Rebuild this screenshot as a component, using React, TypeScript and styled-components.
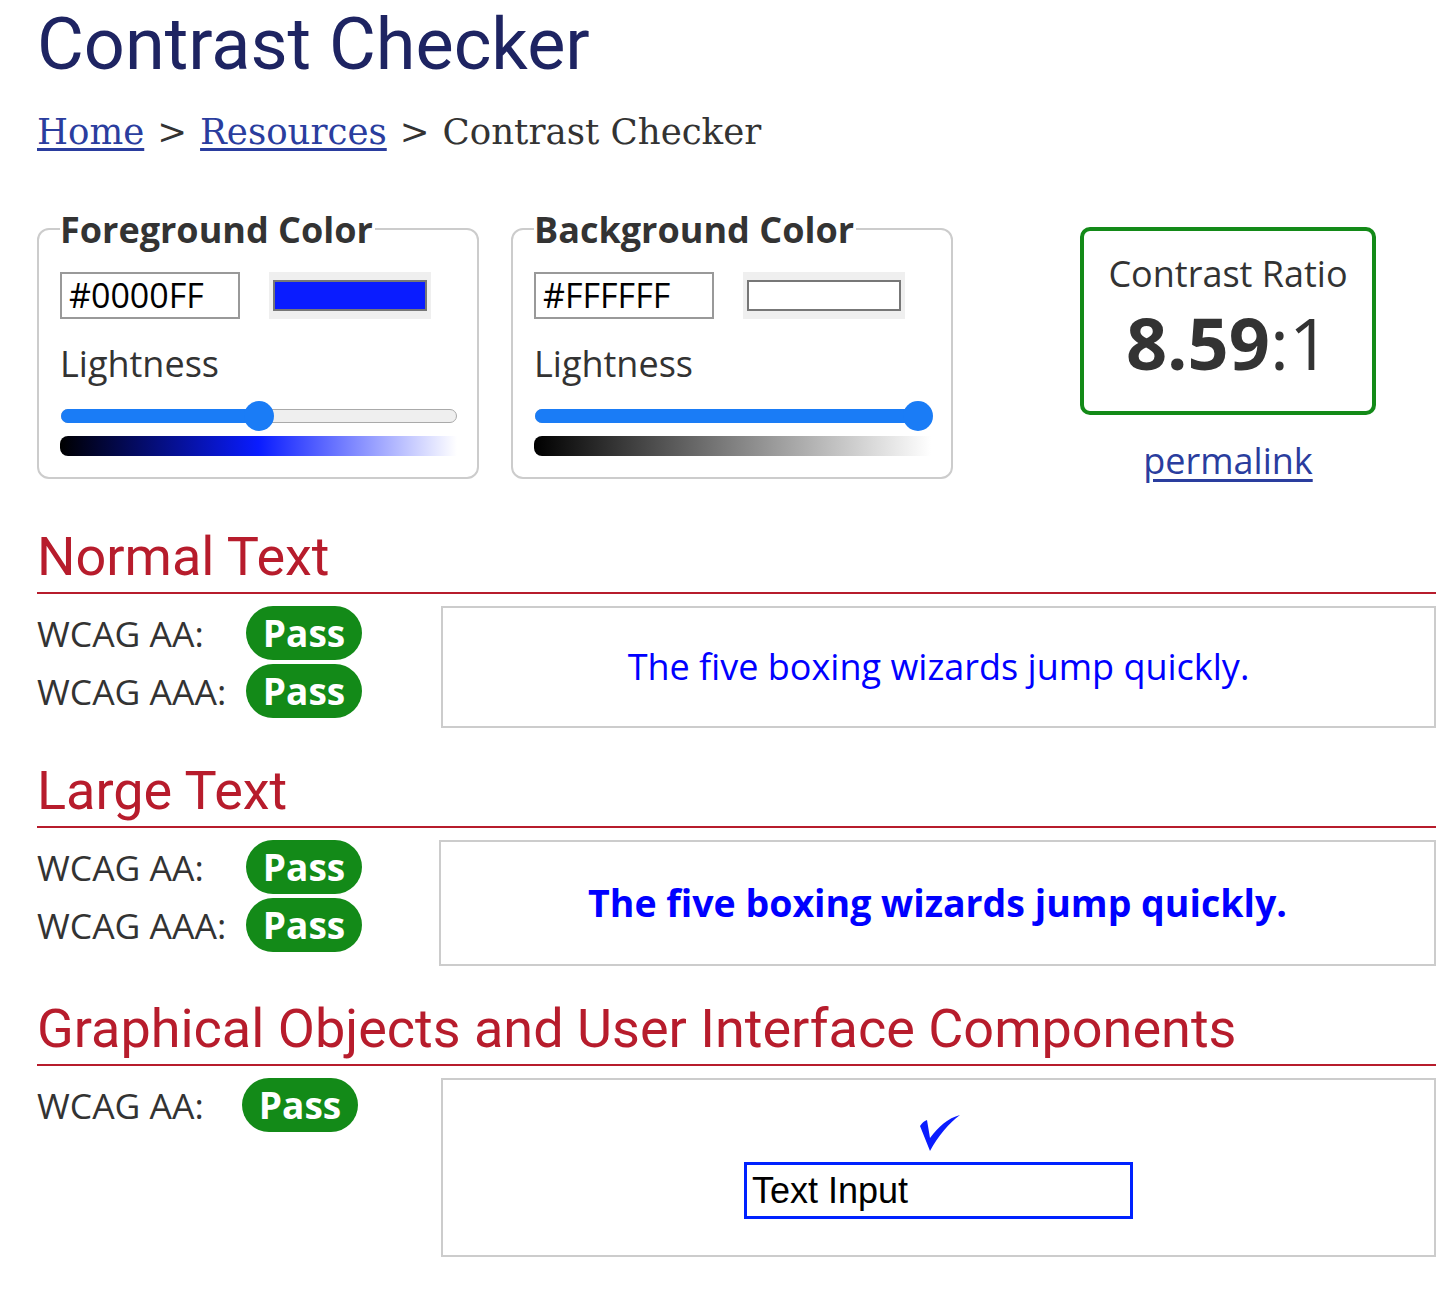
import React from "react";
import styled, { createGlobalStyle } from "styled-components";

const GlobalStyle = createGlobalStyle`
  html, body {
    margin: 0;
    padding: 0;
    background: #fff;
    overflow: hidden;
  }
  body {
    font-family: "Open Sans", "Liberation Sans", sans-serif;
    color: #333;
  }
`

const Page = styled.div`
  padding: 0 12px 0 37px;
  width: 1399px;
`
const Title = styled.h1`
  font-family: Roboto, "Liberation Sans", sans-serif;
  font-weight: 400;
  font-size: 72px;
  line-height: 1;
  color: #1e2462;
  margin: 9px 0 0;
`
const Crumbs = styled.div`
  font-family: "DejaVu Serif", "Liberation Serif", serif;
  font-size: 35.6px;
  color: #333;
  margin-top: 30px;
  line-height: 1.2;
`
const CrumbLink = styled.a`
  color: #2a3d9e;
  text-decoration: underline;
  text-underline-offset: 4px;
`
const Sep = styled.span`
  margin: 0 13px;
`
const Controls = styled.div`
  display: flex;
  align-items: flex-start;
  margin-top: 54px;
`
const Fieldset = styled.fieldset`
  width: 442px;
  box-sizing: border-box;
  border: 2px solid #ccc;
  border-radius: 12px;
  margin: 0 32px 0 0;
  padding: 0 20px 21px 21px;
  min-width: 0;
`
const Legend = styled.legend`
  font-size: 36px;
  font-weight: 700;
  color: #333;
  padding: 0 2px 0 0;
  line-height: 1.2;
  margin-left: 0;
`
const HexRow = styled.div`
  display: flex;
  align-items: flex-start;
  gap: 29px;
  margin-top: 21px;
`
const HexInput = styled.div`
  width: 180px;
  height: 47px;
  box-sizing: border-box;
  border: 2px solid #999;
  font-size: 34px;
  line-height: 43px;
  padding-left: 7px;
  color: #000;
`
const Swatch = styled.div`
  width: 162px;
  height: 47px;
  box-sizing: border-box;
  background: #efefef;
  padding: 8px 4px;
`
const SwatchColor = styled.div<{ $color: string }>`
  width: 100%;
  height: 100%;
  box-sizing: border-box;
  border: 2px solid #777;
  background: ${(p) => p.$color};
`
const Label = styled.div`
  font-size: 36px;
  color: #333;
  margin-top: 22px;
  line-height: 1.3;
`
const Track = styled.div`
  position: relative;
  height: 14px;
  margin: 21px 0 0 1px;
  box-sizing: border-box;
  border: 1px solid #aaa;
  border-radius: 7px;
  background: #efefef;
`
const Fill = styled.div`
  position: absolute;
  left: -1px;
  top: -1px;
  bottom: -1px;
  border-radius: 7px;
  background: #1a7cf6;
`
const Thumb = styled.div`
  position: absolute;
  top: 50%;
  width: 30px;
  height: 30px;
  margin: -15px 0 0 -15px;
  border-radius: 50%;
  background: #1a7cf6;
`
const Gradient = styled.div<{ $mid: string }>`
  height: 20px;
  margin-top: 13px;
  border-radius: 8px 0 0 8px;
  background: linear-gradient(to right, #000 0%, ${(p) => p.$mid} 50%, #fff 100%);
`
const RatioCol = styled.div`
  display: flex;
  flex-direction: column;
  align-items: center;
  margin-left: 95px;
  margin-top: 19px;
`
const RatioBox = styled.div`
  width: 296px;
  height: 188px;
  box-sizing: border-box;
  border: 4px solid #138a18;
  border-radius: 10px;
  display: flex;
  flex-direction: column;
  align-items: center;
  padding-top: 21px;
`
const RatioLabel = styled.div`
  font-size: 36px;
  color: #333;
  line-height: 1.2;
`
const RatioValue = styled.div`
  font-size: 72px;
  color: #333;
  line-height: 1.2;
  margin-top: 4px;
  b {
    font-weight: 700;
  }
`
const Permalink = styled.a`
  font-size: 36px;
  color: #2a3d9e;
  margin-top: 21px;
  text-decoration: underline;
  text-underline-offset: 5px;
`
const SectionTitle = styled.h2<{ $top: number }>`
  font-family: Roboto, "Liberation Sans", sans-serif;
  font-weight: 400;
  font-size: 54px;
  line-height: 1;
  color: #b71c2c;
  margin: ${(p) => p.$top}px 0 0;
  padding-bottom: 8px;
  border-bottom: 2px solid #b71c2c;
`
const Result = styled.div`
  display: flex;
  align-items: flex-start;
  margin-top: 12px;
`
const Levels = styled.div<{ $width: number }>`
  width: ${(p) => p.$width}px;
  flex: none;
  display: flex;
  flex-direction: column;
  gap: 4px;
`
const Level = styled.div`
  display: flex;
  align-items: center;
  font-size: 35.5px;
  color: #333;
`
const LevelName = styled.span<{ $width: number }>`
  width: ${(p) => p.$width}px;
`
const Badge = styled.span`
  width: 116px;
  height: 54px;
  border-radius: 27px;
  background: #138a18;
  color: #fff;
  font-weight: 700;
  font-size: 37px;
  display: flex;
  align-items: center;
  justify-content: center;
`
const Sample = styled.div<{ $height: number }>`
  flex: 1;
  height: ${(p) => p.$height}px;
  box-sizing: border-box;
  border: 2px solid #ccc;
  display: flex;
  flex-direction: column;
  align-items: center;
  justify-content: center;
  color: #0000ff;
`
const SampleText = styled.div<{ $large?: boolean }>`
  font-size: ${(p) => (p.$large ? 37.5 : 36)}px;
  font-weight: ${(p) => (p.$large ? 700 : 400)};
`
const Check = styled.svg`
  width: 40px;
  height: 36px;
  margin-left: 2px;
`
const TextInput = styled.input`
  width: 389px;
  height: 57px;
  box-sizing: border-box;
  margin-top: 11px;
  border: 3px solid #0022ff;
  outline: none;
  font-family: "Liberation Sans", Arial, sans-serif;
  font-size: 36px;
  color: #000;
  padding: 0 5px;
  background: #fff;
`

function Picker({ title, hex, color, pos }: { title: string; hex: string; color: string; pos: number }) {
  return (
    <Fieldset>
      <Legend>{title}</Legend>
      <HexRow>
        <HexInput>{hex}</HexInput>
        <Swatch>
          <SwatchColor $color={color} />
        </Swatch>
      </HexRow>
      <Label>Lightness</Label>
      <Track>
        <Fill style={{ width: `calc(${pos}% + 2px)` }} />
        <Thumb style={{ left: `${pos}%` }} />
      </Track>
      <Gradient $mid={color === "#fff" ? "#808080" : "#0a1cff"} />
    </Fieldset>
  );
}

export default function App() {
  return (
    <Page>
      <GlobalStyle />
      <Title>Contrast Checker</Title>
      <Crumbs>
        <CrumbLink href="#">Home</CrumbLink>
        <Sep>&gt;</Sep>
        <CrumbLink href="#">Resources</CrumbLink>
        <Sep>&gt;</Sep>
        Contrast Checker
      </Crumbs>

      <Controls>
        <Picker title="Foreground Color" hex="#0000FF" color="#0a1cff" pos={50} />
        <Picker title="Background Color" hex="#FFFFFF" color="#fff" pos={97} />
        <RatioCol>
          <RatioBox>
            <RatioLabel>Contrast Ratio</RatioLabel>
            <RatioValue>
              <b>8.59</b>:1
            </RatioValue>
          </RatioBox>
          <Permalink href="#">permalink</Permalink>
        </RatioCol>
      </Controls>

      <SectionTitle $top={45}>Normal Text</SectionTitle>
      <Result>
        <Levels $width={404}>
          <Level>
            <LevelName $width={209}>WCAG AA:</LevelName>
            <Badge>Pass</Badge>
          </Level>
          <Level>
            <LevelName $width={209}>WCAG AAA:</LevelName>
            <Badge>Pass</Badge>
          </Level>
        </Levels>
        <Sample $height={122}>
          <SampleText>The five boxing wizards jump quickly.</SampleText>
        </Sample>
      </Result>

      <SectionTitle $top={36}>Large Text</SectionTitle>
      <Result>
        <Levels $width={402}>
          <Level>
            <LevelName $width={209}>WCAG AA:</LevelName>
            <Badge>Pass</Badge>
          </Level>
          <Level>
            <LevelName $width={209}>WCAG AAA:</LevelName>
            <Badge>Pass</Badge>
          </Level>
        </Levels>
        <Sample $height={126}>
          <SampleText $large>The five boxing wizards jump quickly.</SampleText>
        </Sample>
      </Result>

      <SectionTitle $top={36}>Graphical Objects and User Interface Components</SectionTitle>
      <Result>
        <Levels $width={404}>
          <Level>
            <LevelName $width={205}>WCAG AA:</LevelName>
            <Badge>Pass</Badge>
          </Level>
        </Levels>
        <Sample $height={179}>
          <Check viewBox="0 0 40 36">
            <path d="M0 11 C2 8 4 6 7 5 L10 23 C18 12 28 3 40 0 C29 8 18 21 10 36 Z" fill="#0a1cff" />
          </Check>
          <TextInput defaultValue="Text Input" readOnly />
        </Sample>
      </Result>
    </Page>
  );
}
